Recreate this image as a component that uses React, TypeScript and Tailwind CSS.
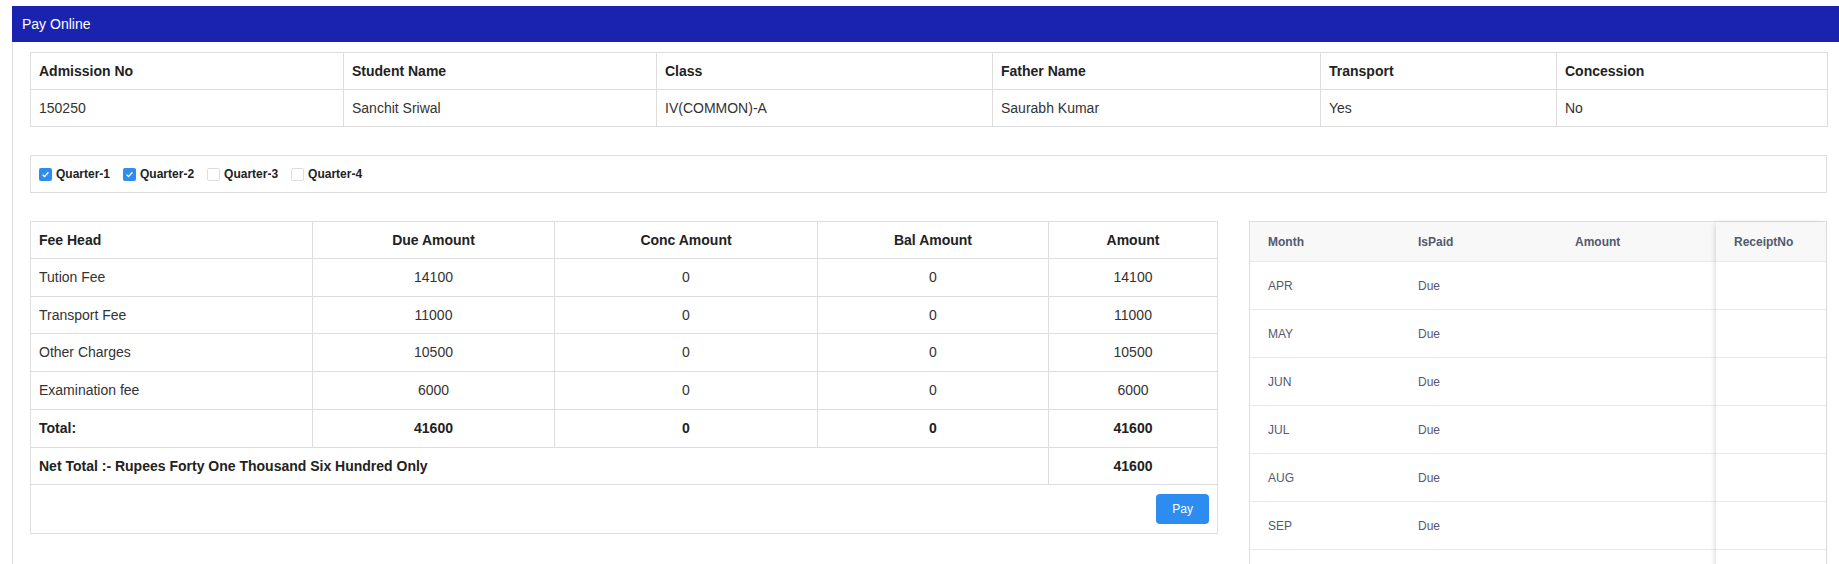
import React from "react";

const student = [
  ["Admission No", "150250"],
  ["Student Name", "Sanchit Sriwal"],
  ["Class", "IV(COMMON)-A"],
  ["Father Name", "Saurabh Kumar"],
  ["Transport", "Yes"],
  ["Concession", "No"],
];
const infoCols = ["w-[313px]", "w-[313px]", "w-[336px]", "w-[328px]", "w-[236px]", "w-[271px]"];

const fees = [
  ["Tution Fee", "14100", "0", "0", "14100"],
  ["Transport Fee", "11000", "0", "0", "11000"],
  ["Other Charges", "10500", "0", "0", "10500"],
  ["Examination fee", "6000", "0", "0", "6000"],
];
const feeCols = ["w-[282px]", "w-[242px]", "w-[263px]", "w-[231px]", "w-[169px]"];

const quarters: [string, boolean][] = [
  ["Quarter-1", true],
  ["Quarter-2", true],
  ["Quarter-3", false],
  ["Quarter-4", false],
];

// only the months that fit in the view; the next row is cut by the window edge
const months = ["APR", "MAY", "JUN", "JUL", "AUG", "SEP"];

const Check = ({ checked }: { checked: boolean }) =>
  checked ? (
    <span className="w-[13px] h-[13px] rounded-[2px] bg-[#2d8cf0] flex items-center justify-center">
      <svg width="9" height="9" viewBox="0 0 9 9">
        <path d="M1.6 4.7 L3.6 6.6 L7.4 2.3" fill="none" stroke="white" strokeWidth="1.4" />
      </svg>
    </span>
  ) : (
    <span className="w-[13px] h-[13px] rounded-[2px] bg-white border border-[#dcdee2]" />
  );

const cell = "border border-[#ddd] px-[8px] py-[8px] text-[14px]";

const App = () => {
  return (
    <div className="h-[564px] overflow-hidden bg-white pt-[6px] pl-[12px] flex flex-col font-['Liberation_Sans',Arial,sans-serif] text-[#333]">
      <div className="h-[36px] shrink-0 bg-[#1a22b0] text-white text-[14px] leading-[36px] pl-[10px]">Pay Online</div>
      <div className="flex-1 border-l border-[#ddd] pl-[17px] pr-[12px] pt-[10px]">
        {/* student info */}
        <table className="w-full table-fixed border-collapse">
          <colgroup>
            {infoCols.map((c, i) => (
              <col key={i} className={c} />
            ))}
          </colgroup>
          <thead>
            <tr>
              {student.map(([h]) => (
                <th key={h} className={`${cell} leading-[20px] text-left font-bold text-[#222]`}>{h}</th>
              ))}
            </tr>
          </thead>
          <tbody>
            <tr>
              {student.map(([h, v]) => (
                <td key={h} className={`${cell} leading-[20px]`}>{v}</td>
              ))}
            </tr>
          </tbody>
        </table>

        {/* quarters */}
        <div className="mt-[28px] h-[38px] border border-[#ddd] flex items-center gap-[13px] pl-[8px]">
          {quarters.map(([q, c]) => (
            <label key={q} className="flex items-center gap-[4px] text-[12px] font-bold text-[#222]">
              <Check checked={c} />
              <span>{q}</span>
            </label>
          ))}
        </div>

        <div className="mt-[28px] flex items-start gap-[31px]">
          {/* fee table */}
          <table className="w-[1187px] shrink-0 table-fixed border-collapse">
            <colgroup>
              {feeCols.map(c => (
                <col key={c} className={c} />
              ))}
            </colgroup>
            <thead>
              <tr>
                {["Fee Head", "Due Amount", "Conc Amount", "Bal Amount", "Amount"].map((h, i) => (
                  <th key={h} className={`${cell} leading-[20px] font-bold text-[#222] ${i === 0 ? "text-left" : "text-center"}`}>{h}</th>
                ))}
              </tr>
            </thead>
            <tbody>
              {fees.map(row => (
                <tr key={row[0]}>
                  {row.map((v, i) => (
                    <td key={i} className={`${cell} leading-[20.7px] ${i === 0 ? "text-left" : "text-center"}`}>{v}</td>
                  ))}
                </tr>
              ))}
              <tr>
                {["Total:", "41600", "0", "0", "41600"].map((v, i) => (
                  <td key={i} className={`${cell} leading-[20.7px] font-bold text-[#222] ${i === 0 ? "text-left" : "text-center"}`}>{v}</td>
                ))}
              </tr>
              <tr>
                <td colSpan={4} className={`${cell} leading-[20.7px] font-bold text-[#222]`}>Net Total :- Rupees Forty One Thousand Six Hundred Only</td>
                <td className={`${cell} leading-[20.7px] font-bold text-[#222] text-center`}>41600</td>
              </tr>
              <tr>
                <td colSpan={5} className="border border-[#ddd] px-[8px] pt-[9px] pb-[9px]">
                  <div className="flex justify-end">
                    <button className="h-[30px] px-[16px] rounded-[4px] bg-[#2d8cf0] text-white text-[12px]">Pay</button>
                  </div>
                </td>
              </tr>
            </tbody>
          </table>

          {/* month table */}
          <div className="flex-1 border border-[#dcdee2] flex text-[12px] text-[#515a6e]">
            <div className="flex-1">
              <div className="h-[40px] grid grid-cols-[150px_157px_1fr] items-center bg-[#f8f8f9] border-b border-[#e8eaec] font-bold">
                <span className="pl-[18px]">Month</span>
                <span className="pl-[18px]">IsPaid</span>
                <span className="pl-[18px]">Amount</span>
              </div>
              {months.map(m => (
                <div key={m} className="h-[48px] grid grid-cols-[150px_157px_1fr] items-center border-b border-[#e8eaec]">
                  <span className="pl-[18px]">{m}</span>
                  <span className="pl-[18px]">Due</span>
                  <span />
                </div>
              ))}
              <div className="h-[48px] border-b border-[#e8eaec]" />
            </div>
            <div className="relative w-[110px] bg-white shadow-[-2px_0_6px_-2px_rgba(0,0,0,0.2)]">
              <div className="h-[40px] flex items-center bg-[#f8f8f9] border-b border-[#e8eaec] font-bold pl-[18px]">ReceiptNo</div>
              {months.map(m => (
                <div key={m} className="h-[48px] border-b border-[#e8eaec]" />
              ))}
              <div className="h-[48px] border-b border-[#e8eaec]" />
            </div>
          </div>
        </div>
      </div>
    </div>
  );
};

export default App;
